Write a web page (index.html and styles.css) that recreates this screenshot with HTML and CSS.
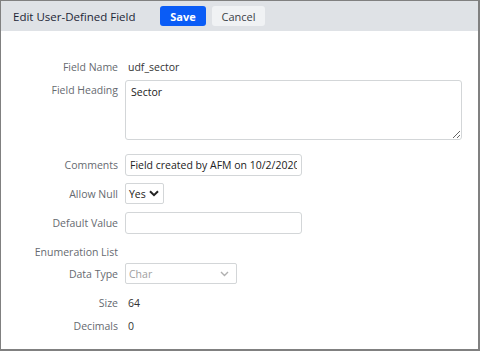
FILE: index.html
```html
<!DOCTYPE html>
<html lang="en">
<head>
    <meta charset="UTF-8">
    <title>Edit User-Defined Field</title>
    <link rel="stylesheet" href="styles.css">
</head>
<body>
    <div class="dialog">
        <div class="dialog-header">
            <span class="dialog-title">Edit User-Defined Field</span>
            <button class="btn btn-primary">Save</button>
            <button class="btn btn-secondary">Cancel</button>
        </div>

        <div class="form">
            <div class="row row-name">
                <label class="label">Field Name</label>
                <span class="value">udf_sector</span>
            </div>
            <div class="row row-heading">
                <label class="label">Field Heading</label>
                <textarea class="textarea">Sector</textarea>
            </div>
            <div class="row row-comments">
                <label class="label">Comments</label>
                <input class="input" type="text" value="Field created by AFM on 10/2/2020">
            </div>
            <div class="row row-null">
                <label class="label">Allow Null</label>
                <div class="select select-small">
                    <span>Yes</span>
                    <svg width="10" height="7" viewBox="0 0 10 7">
                        <path d="M1 1.2 L5 5.2 L9 1.2" fill="none" stroke="#222" stroke-width="2"/>
                    </svg>
                </div>
            </div>
            <div class="row row-default">
                <label class="label">Default Value</label>
                <input class="input" type="text" value="">
            </div>
            <div class="row row-enum">
                <label class="label">Enumeration List</label>
            </div>
            <div class="row row-type">
                <label class="label">Data Type</label>
                <div class="select select-disabled">
                    <span>Char</span>
                    <svg width="9" height="6" viewBox="0 0 9 6">
                        <path d="M1 1 L4.5 4.5 L8 1" fill="none" stroke="#b0b0b0" stroke-width="1.4"/>
                    </svg>
                </div>
            </div>
            <div class="row row-size">
                <label class="label">Size</label>
                <span class="value">64</span>
            </div>
            <div class="row row-decimals">
                <label class="label">Decimals</label>
                <span class="value">0</span>
            </div>
        </div>
    </div>
</body>
</html>
```

FILE: styles.css
```css
* {
    margin: 0;
    padding: 0;
    box-sizing: border-box;
}

body {
    font-family: 'Open Sans', 'Noto Sans', Arial, sans-serif;
    background: #fff;
    color: #333;
}

.dialog {
    width: 480px;
    height: 351px;
    border-top: 1px solid #808080;
    border-left: 1px solid #808080;
    border-right: 2px solid #808080;
    border-bottom: 2px solid #808080;
    background: #fff;
}

.dialog-header {
    height: 30px;
    background: #dfe2e6;
    display: flex;
    align-items: center;
    padding-left: 12px;
}

.dialog-title {
    font-size: 11.5px;
    color: #1d2636;
    width: 147px;
}

.btn {
    height: 20px;
    border: none;
    border-radius: 3px;
    font-family: inherit;
    font-size: 11px;
    cursor: pointer;
}

.btn-primary {
    width: 46px;
    background: #0a5cf6;
    color: #fff;
    font-weight: bold;
}

.btn-secondary {
    width: 53px;
    margin-left: 6px;
    background: #f0f2f4;
    color: #3a3f47;
}

.form {
    padding-top: 26px;
}

.row {
    display: flex;
    align-items: center;
    font-size: 10.5px;
}

.label {
    width: 117px;
    text-align: right;
    color: #666a70;
    margin-right: 7px;
    flex-shrink: 0;
}

.value {
    color: #333;
    padding-left: 3px;
}

.row-name { height: 20px; }

.row-heading {
    align-items: flex-start;
    margin-top: 3px;
}

.row-heading .label {
    padding-top: 3px;
}

.textarea {
    width: 337px;
    height: 60px;
    border: 1px solid #d3d6d8;
    border-radius: 3px;
    padding: 4px 5px;
    font-family: inherit;
    font-size: 10.5px;
    color: #222;
    resize: vertical;
    display: block;
}

.input {
    width: 177px;
    height: 22px;
    border: 1px solid #d3d6d8;
    border-radius: 3px;
    padding: 0 4px;
    font-family: inherit;
    font-size: 10.5px;
    color: #222;
}

.row-comments { margin-top: 14px; }
.row-null { margin-top: 7px; }
.row-default { margin-top: 8px; }
.row-enum { margin-top: 8px; height: 20px; }
.row-type { margin-top: 1px; }
.row-size { margin-top: 9px; height: 20px; }
.row-decimals { margin-top: 3px; height: 20px; }

.select {
    display: flex;
    align-items: center;
    justify-content: space-between;
    border: 1px solid #d3d6d8;
    border-radius: 2px;
    padding: 0 4px 0 3px;
}

.select-small {
    width: 39px;
    height: 21px;
    color: #222;
}

.select-disabled {
    width: 112px;
    height: 21px;
    color: #a0a0a0;
    padding-right: 7px;
}
```
